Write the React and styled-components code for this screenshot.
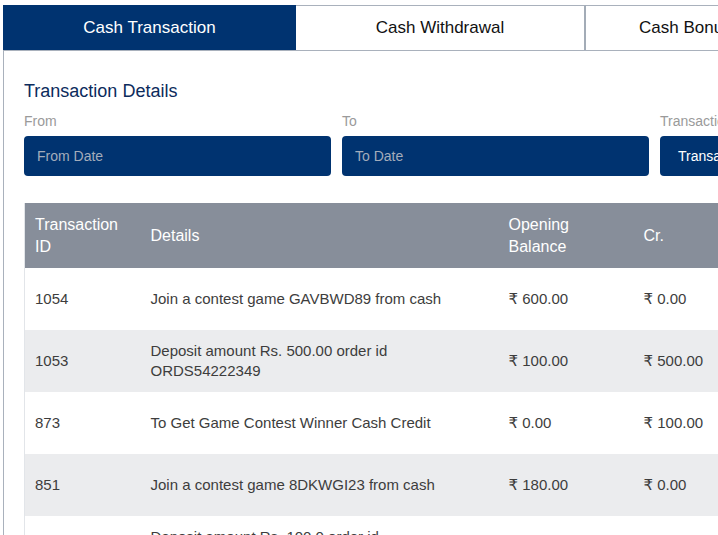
import React, { useState } from "react";
import styled, { createGlobalStyle } from "styled-components";

const GlobalStyle = createGlobalStyle`
  html, body {
    margin: 0;
    padding: 0;
    overflow: hidden;
    background: #fff;
    font-family: "Liberation Sans", Arial, "DejaVu Sans", sans-serif;
  }
`;

const tabs = [
  { key: "cash", label: "Cash Transaction" },
  { key: "withdraw", label: "Cash Withdrawal" },
  { key: "bonus", label: "Cash Bonus Transaction" },
];

const rows = [
  { id: "1054", details: "Join a contest game GAVBWD89 from cash", opening: "600.00", cr: "0.00", dr: "0.00", closing: "600.00" },
  { id: "1053", details: "Deposit amount Rs. 500.00 order id ORDS54222349", opening: "100.00", cr: "500.00", dr: "0.00", closing: "600.00" },
  { id: "873", details: "To Get Game Contest Winner Cash Credit", opening: "0.00", cr: "100.00", dr: "0.00", closing: "100.00" },
  { id: "851", details: "Join a contest game 8DKWGI23 from cash", opening: "180.00", cr: "0.00", dr: "180.00", closing: "0.00" },
  { id: "850", details: "Deposit amount Rs. 100.0 order id ORDS54218870", opening: "80.00", cr: "100.00", dr: "0.00", closing: "180.00" },
  { id: "812", details: "Join a contest game K2LQWE11 from cash", opening: "120.00", cr: "0.00", dr: "40.00", closing: "80.00" },
];

const App = () => {
  const [active, setActive] = useState("cash");

  return (
    <>
      <GlobalStyle />
      <Page>
        <TabBar>
          {tabs.map((t) => (
            <Tab key={t.key} active={active === t.key} onClick={() => setActive(t.key)}>
              {t.label}
            </Tab>
          ))}
        </TabBar>
        <Panel>
          <Title>Transaction Details</Title>
          <Filters>
            <Field>
              <Label>From</Label>
              <DateInput placeholder="From Date" />
            </Field>
            <Field>
              <Label>To</Label>
              <DateInput placeholder="To Date" />
            </Field>
            <Field>
              <Label>Transaction Type</Label>
              <SelectBox>Transaction Type</SelectBox>
            </Field>
          </Filters>
          <Table>
            <colgroup>
              <col style={{ width: 116 }} />
              <col style={{ width: 358 }} />
              <col style={{ width: 135 }} />
              <col style={{ width: 110 }} />
              <col style={{ width: 110 }} />
              <col style={{ width: 114 }} />
            </colgroup>
            <thead>
              <tr>
                <Th>Transaction ID</Th>
                <Th>Details</Th>
                <Th>Opening Balance</Th>
                <Th>Cr.</Th>
                <Th>Dr.</Th>
                <Th>Closing Balance</Th>
              </tr>
            </thead>
            <tbody>
              {rows.map((r, i) => (
                <Row key={r.id} striped={i % 2 === 1}>
                  <Td>{r.id}</Td>
                  <Td>{r.details}</Td>
                  <Td>₹ {r.opening}</Td>
                  <Td>₹ {r.cr}</Td>
                  <Td>₹ {r.dr}</Td>
                  <Td>₹ {r.closing}</Td>
                </Row>
              ))}
            </tbody>
          </Table>
        </Panel>
      </Page>
    </>
  );
};

const Page = styled.div`
  width: 1010px;
  padding: 5px 0 0 3px;
`;

const TabBar = styled.div`
  display: flex;
  border-bottom: 1px solid #a9b1bc;
`;

const Tab = styled.button.withConfig({ shouldForwardProp: (p) => p !== "active" })`
  flex: 0 0 auto;
  width: ${({ active }) => (active ? "293px" : "290px")};
  height: 45px;
  border: none;
  border-top: ${({ active }) => (active ? "none" : "1px solid #a9b1bc")};
  border-right: ${({ active }) => (active ? "none" : "2px solid #a3acb7")};
  background: ${({ active }) => (active ? "#003370" : "#fff")};
  color: ${({ active }) => (active ? "#fff" : "#111")};
  font-family: inherit;
  font-size: 17px;
  padding: 0;
  cursor: pointer;
  outline: none;

  &:last-child {
    width: 420px;
    text-align: left;
    padding-left: 53px;
    border-right: none;
  }
`;

const Panel = styled.div`
  border-left: 1px solid #a9b1bc;
  padding: 29px 0 40px 20px;
`;

const Title = styled.h2`
  margin: 0;
  font-size: 18px;
  font-weight: 400;
  line-height: 22px;
  color: #0c2b5c;
`;

const Filters = styled.div`
  display: grid;
  grid-template-columns: repeat(3, 307px);
  column-gap: 11px;
  margin-top: 10px;
`;

const Field = styled.div`
  display: flex;
  flex-direction: column;
  gap: 6px;
`;

const Label = styled.label`
  font-size: 14px;
  line-height: 18px;
  color: #9a9a9a;
  white-space: nowrap;
`;

const DateInput = styled.input`
  box-sizing: border-box;
  height: 40px;
  width: 100%;
  border: none;
  border-radius: 4px;
  background: #003370;
  color: #fff;
  font-family: inherit;
  font-size: 14px;
  padding: 0 13px;
  outline: none;

  &::placeholder {
    color: #a3acbb;
  }
`;

const SelectBox = styled.div`
  box-sizing: border-box;
  display: flex;
  align-items: center;
  height: 40px;
  border-radius: 4px;
  background: #003370;
  color: #fff;
  font-size: 14px;
  padding: 0 18px;
`;

const Table = styled.table`
  margin-top: 27px;
  width: 943px;
  table-layout: fixed;
  border-collapse: collapse;
  border-left: 1px solid #e2e5e9;
  font-size: 15px;
  color: #3d3d3d;
`;

const Th = styled.th`
  height: 65px;
  box-sizing: border-box;
  background: #878e9a;
  color: #fff;
  font-size: 16px;
  font-weight: 400;
  line-height: 22px;
  text-align: left;
  vertical-align: middle;
  padding: 0 10px;
`;

const Row = styled.tr.withConfig({ shouldForwardProp: (p) => p !== "striped" })`
  background: ${({ striped }) => (striped ? "#ebecee" : "#fff")};
`;

const Td = styled.td`
  height: 62px;
  box-sizing: border-box;
  line-height: 20px;
  vertical-align: middle;
  padding: 0 10px;
`;

export default App;
